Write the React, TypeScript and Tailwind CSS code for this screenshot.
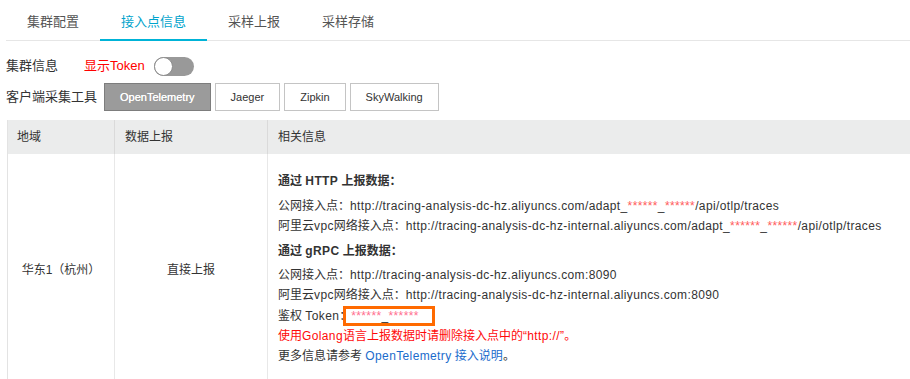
import React from 'react';

const tabs = ['集群配置', '接入点信息', '采样上报', '采样存储'];
const tools = ['OpenTelemetry', 'Jaeger', 'Zipkin', 'SkyWalking'];

// latin runs carry a bit of letter spacing, like the original console
const L: React.FC<{ children: React.ReactNode; className?: string }> = ({ children, className = '' }) => (
  <span className={`tracking-[0.37px] ${className}`}>{children}</span>
);

const Stars: React.FC = () => <span className="text-[#ff5c5c]">******</span>;

const Line: React.FC<{ children: React.ReactNode; className?: string }> = ({ children, className = '' }) => (
  <div className={`h-[20px] leading-[20px] whitespace-nowrap ${className}`}>{children}</div>
);

const App: React.FC = () => {
  return (
    <div className="w-[910px] h-[379px] overflow-hidden bg-white pl-[6px] text-[#333] font-['Liberation_Sans','Noto_Sans_CJK_SC',sans-serif]">
      {/* tabs */}
      <div className="flex border-b border-[#e6e6e6]">
        {tabs.map((t, i) => (
          <div
            key={t}
            className={
              i === 1
                ? 'h-[41px] -mb-px pt-[4px] px-[21px] flex items-center text-[13px] border-b-2 border-[#00b3d7] text-[#00a3cc]'
                : 'h-[41px] -mb-px pt-[4px] px-[21px] flex items-center text-[13px] border-b-2 border-transparent text-[#555]'
            }
          >
            {t}
          </div>
        ))}
      </div>

      {/* cluster info */}
      <div className="mt-[16px] h-[18px] flex items-center text-[13px]">
        <span className="w-[78px]">集群信息</span>
        <span className="text-[#ff0000]">显示Token</span>
        <div className="ml-[9px] w-[40px] h-[19px] rounded-full bg-[#999] flex items-center">
          <div className="w-[19px] h-[19px] rounded-full bg-white border border-[#8c8c8c]"></div>
        </div>
      </div>

      {/* client tools */}
      <div className="mt-[8px] h-[28px] flex items-center text-[13px]">
        <span className="w-[98px]">客户端采集工具</span>
        <div className="flex gap-[4px]">
          {tools.map((t, i) => (
            <div
              key={t}
              className={
                i === 0
                  ? 'h-[28px] px-[15px] flex items-center text-[11px] border border-[#7d7d7d] bg-[#9b9b9b] text-white [text-shadow:0_0_0.4px_#fff]'
                  : 'h-[28px] px-[15px] flex items-center text-[11px] border border-[#c4c4c4] bg-white text-[#333]'
              }
            >
              {t}
            </div>
          ))}
        </div>
      </div>

      {/* table */}
      <div className="mt-[9px] ml-px grid grid-cols-[107px_153px_1fr] border-l border-[#e3e3e3] text-[12px]">
        <div className="h-[34px] bg-[#ebecec] border-r border-[#dadada] flex items-center pl-[9px]">地域</div>
        <div className="h-[34px] bg-[#ebecec] border-r border-[#dadada] flex items-center pl-[10px]">数据上报</div>
        <div className="h-[34px] bg-[#ebecec] flex items-center pl-[10px]">相关信息</div>

        <div className="border-r border-[#e8e8e8] flex items-center justify-center">华东1（杭州）</div>
        <div className="border-r border-[#e8e8e8] flex items-center justify-center">直接上报</div>
        <div className="pl-[10px] pt-[17px] pb-[20px]">
          <Line className="font-bold mb-[5px]">
            通过 <L>HTTP</L> 上报数据：
          </Line>
          <Line>
            公网接入点：
            <L>
              http://tracing-analysis-dc-hz.aliyuncs.com/adapt_<Stars />_<Stars />/api/otlp/traces
            </L>
          </Line>
          <Line>
            阿里云<L>vpc</L>网络接入点：
            <L>
              http://tracing-analysis-dc-hz-internal.aliyuncs.com/adapt_<Stars />_<Stars />/api/otlp/traces
            </L>
          </Line>
          <Line className="font-bold mt-[5px] mb-[4px]">
            通过 <L>gRPC</L> 上报数据：
          </Line>
          <Line>
            公网接入点：<L>http://tracing-analysis-dc-hz.aliyuncs.com:8090</L>
          </Line>
          <Line>
            阿里云<L>vpc</L>网络接入点：<L>http://tracing-analysis-dc-hz-internal.aliyuncs.com:8090</L>
          </Line>
          <div className="h-[21px] flex items-center whitespace-nowrap">
            <span>鉴权&nbsp;</span>
            <L>Token</L>
            <span>：</span>
            <span className="ml-[-8px] h-[20px] w-[92px] border-[3px] border-[#ff6a00] flex items-center pl-[5px]">
              <L>
                <span className="text-[#ff6f8f]">******</span>_<span className="text-[#ff6f8f]">******</span>
              </L>
            </span>
          </div>
          <Line className="text-[#ff0a0a]">
            使用<L>Golang</L>语言上报数据时请删除接入点中的<L>“http://”</L>。
          </Line>
          <Line>
            更多信息请参考 <L className="text-[#1b6ccc]">OpenTelemetry</L>
            <span className="text-[#1b6ccc]"> 接入说明</span>。
          </Line>
        </div>
      </div>
    </div>
  );
};

export default App;
